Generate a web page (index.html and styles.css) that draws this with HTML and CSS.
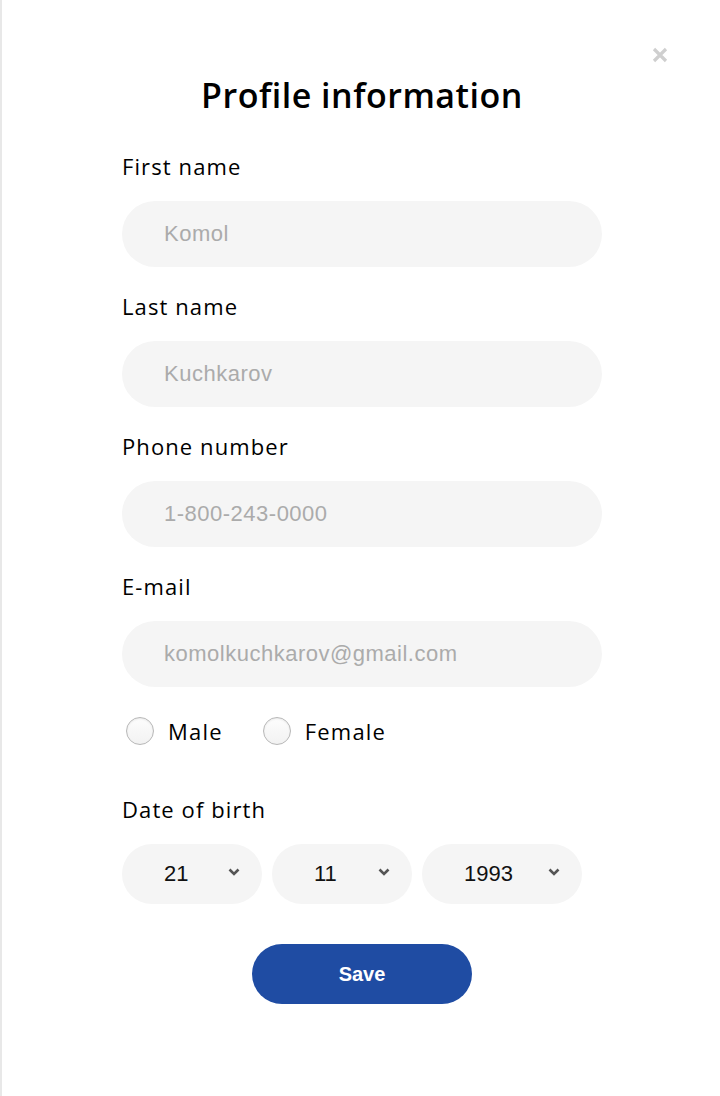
FILE: index.html
```html
<!DOCTYPE html>
<html lang="en">
<head>
<meta charset="utf-8">
<title>Profile information</title>
<link rel="stylesheet" href="styles.css">
</head>
<body>
<div class="modal">
  <button class="close" aria-label="Close">
    <svg width="16" height="16" viewBox="0 0 16 16"><path d="M2 2 L14 14 M14 2 L2 14" stroke="#cfcfcf" stroke-width="3.2" stroke-linecap="butt"/></svg>
  </button>
  <h1 class="title">Profile information</h1>
  <form class="form">
    <div class="field">
      <label class="label">First name</label>
      <div class="input">Komol</div>
    </div>
    <div class="field">
      <label class="label">Last name</label>
      <div class="input">Kuchkarov</div>
    </div>
    <div class="field">
      <label class="label">Phone number</label>
      <div class="input">1-800-243-0000</div>
    </div>
    <div class="field">
      <label class="label">E-mail</label>
      <div class="input">komolkuchkarov@gmail.com</div>
    </div>
    <div class="gender">
      <label class="radio"><span class="dot"></span><span class="radio-text">Male</span></label>
      <label class="radio"><span class="dot"></span><span class="radio-text">Female</span></label>
    </div>
    <div class="dob">
      <label class="label">Date of birth</label>
      <div class="selects">
        <div class="select s-day"><span>21</span><svg class="chev" width="12" height="8" viewBox="0 0 12 8"><path d="M1.5 1.5 L6 6 L10.5 1.5" fill="none" stroke="#555" stroke-width="2.6"/></svg></div>
        <div class="select s-month"><span>11</span><svg class="chev" width="12" height="8" viewBox="0 0 12 8"><path d="M1.5 1.5 L6 6 L10.5 1.5" fill="none" stroke="#555" stroke-width="2.6"/></svg></div>
        <div class="select s-year"><span>1993</span><svg class="chev" width="12" height="8" viewBox="0 0 12 8"><path d="M1.5 1.5 L6 6 L10.5 1.5" fill="none" stroke="#555" stroke-width="2.6"/></svg></div>
      </div>
    </div>
    <div class="actions">
      <button type="button" class="save">Save</button>
    </div>
  </form>
</div>
</body>
</html>
```

FILE: styles.css
```css
* { box-sizing: border-box; }
html, body { margin: 0; padding: 0; background: #fff; }
body { width: 720px; height: 1096px; overflow: hidden; }

.modal {
  position: relative;
  height: 1096px;
  border-left: 2px solid #e8e8e8;
  padding: 75px 118px 0 120px;
  font-family: "Open Sans", "Noto Sans", sans-serif;
  color: #000;
}

.close {
  position: absolute;
  top: 47px;
  right: 52px;
  width: 16px;
  height: 16px;
  padding: 0;
  border: 0;
  background: none;
  display: block;
}
.close svg { display: block; }

.title {
  margin: 0;
  text-align: center;
  font-size: 34px;
  font-weight: 600;
  line-height: 40px;
  letter-spacing: 0.5px;
}

.form { margin-top: 36px; }

.field { margin-bottom: 24px; }

.label {
  display: block;
  font-size: 22px;
  line-height: 30px;
  margin-bottom: 20px;
  letter-spacing: 1.1px;
}

.input {
  height: 66px;
  width: 480px;
  border-radius: 33px;
  background: #f5f5f5;
  padding-left: 42px;
  display: flex;
  align-items: center;
  font-family: "Liberation Sans", Arial, sans-serif;
  font-size: 22px;
  letter-spacing: 0.5px;
  color: #ababab;
}

.gender {
  display: flex;
  gap: 40px;
  margin-top: 28px;
  height: 32px;
  align-items: center;
  padding-left: 4px;
}
.radio { display: flex; align-items: center; gap: 14px; }
.dot {
  width: 28px;
  height: 28px;
  border-radius: 50%;
  border: 1px solid #b8b8b8;
  background: linear-gradient(#fdfdfd, #f2f2f2);
  box-shadow: inset 0 1px 2px rgba(0,0,0,0.08);
}
.radio-text { font-size: 22px; letter-spacing: 1.2px; }

.dob { margin-top: 47px; }
.dob .label { margin-bottom: 20px; }

.selects { display: flex; gap: 10px; }
.select {
  height: 60px;
  border-radius: 30px;
  background: #f5f5f5;
  display: flex;
  align-items: center;
  padding-left: 42px;
  padding-right: 22px;
  justify-content: space-between;
  font-family: "Liberation Sans", Arial, sans-serif;
  font-size: 22px;
  color: #111;
}
.s-day, .s-month { width: 140px; }
.s-year { width: 160px; }
.chev { display: block; margin-top: -5px; }

.actions { display: flex; justify-content: center; margin-top: 40px; }
.save {
  width: 220px;
  height: 60px;
  border: 0;
  border-radius: 30px;
  background: #1f4ca3;
  color: #fff;
  font-family: "Liberation Sans", Arial, sans-serif;
  font-weight: bold;
  font-size: 20px;
  padding: 0;
}
```
